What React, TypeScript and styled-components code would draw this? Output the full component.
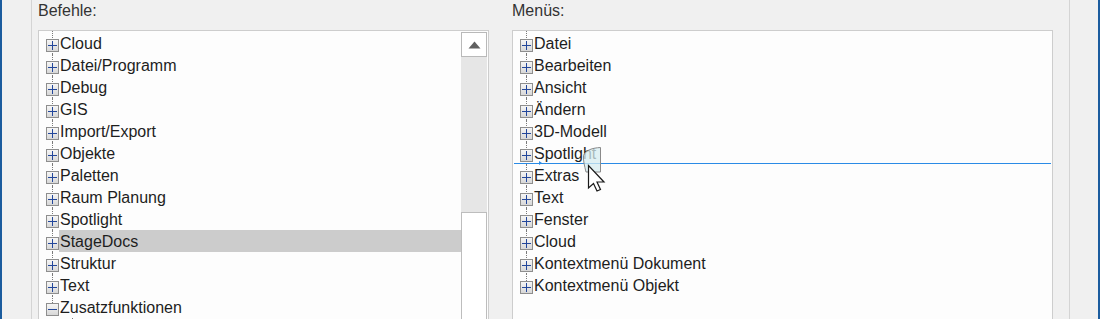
import React from "react";
import styled, { createGlobalStyle } from "styled-components";

const Global = createGlobalStyle`
  html, body { margin: 0; padding: 0; background: #f0f0f0; }
  body { font-family: "Liberation Sans", Arial, sans-serif; }
`;

const Frame = styled.div`
  display: flex;
  width: 1100px;
  height: 319px;
  overflow: hidden;
  background: #f0f0f0;
  color: #1e1e1e;
  font-family: "Liberation Sans", Arial, sans-serif;
  font-size: 16px;
`;

const LeftEdge = styled.div`
  box-sizing: border-box;
  width: 32px;
  flex: none;
  border-left: 2px solid #1b5c9e;
  border-right: 1px solid #d4d4d4;
`;

const RightEdge = styled.div`
  box-sizing: border-box;
  width: 31px;
  flex: none;
  border-left: 1px solid #d4d4d4;
  border-right: 2px solid #1b5c9e;
`;

const Main = styled.div`
  flex: 1;
  display: flex;
  gap: 23px;
  padding: 0 16px 0 6px;
  min-height: 0;
`;

const Column = styled.div<{ $w: number }>`
  width: ${(p) => p.$w}px;
  flex: none;
  display: flex;
  flex-direction: column;
  min-height: 0;
`;

const Heading = styled.div`
  height: 30px;
  flex: none;
  line-height: 22px;
  white-space: nowrap;
  color: #333333;
`;

const TreeBox = styled.div`
  position: relative;
  flex: 1;
  min-height: 0;
  display: flex;
  overflow: hidden;
  background: #fdfdfd;
  border: 1px solid #cdcdcd;
  border-bottom: none;
  padding: 1px 1px 0 1px;
`;

const TreeList = styled.div`
  flex: 1;
  padding: 0 0 0 6px;
  min-width: 0;
`;

const Row = styled.div<{ $level: number }>`
  display: flex;
  height: 22px;
  padding-left: ${(p) => p.$level * 20}px;
`;

const Gutter = styled.div<{ $first?: boolean; $last?: boolean }>`
  position: relative;
  width: 13px;
  flex: none;
  &::before {
    content: "";
    display: block;
    position: absolute;
    left: 6px;
    top: ${(p) => (p.$first ? "-1px" : "0")};
    bottom: ${(p) => (p.$last ? "11px" : "0")};
    border-left: 1px dotted #7a7a7a;
  }
`;

const Expander = styled.svg`
  position: relative;
  display: block;
  margin-top: 7px;
  z-index: 1;
`;

const Label = styled.div<{ $selected?: boolean }>`
  flex: 1;
  padding: 1px 0 0 1px;
  line-height: 21px;
  white-space: nowrap;
  background: ${(p) => (p.$selected ? "#cccccc" : "transparent")};
`;

const ScrollBar = styled.div`
  width: 26px;
  flex: none;
  display: flex;
  flex-direction: column;
  background: #e6e6e6;
`;

const ScrollButton = styled.div`
  box-sizing: border-box;
  height: 25px;
  flex: none;
  border: 1px solid #b9b9b9;
  background: #ffffff;
  display: flex;
  align-items: center;
  justify-content: center;
`;

const ScrollTrack = styled.div`
  height: 155px;
  flex: none;
`;

const ScrollThumb = styled.div`
  flex: 1;
  background: #ffffff;
  border: 1px solid #bdbdbd;
  border-bottom: none;
`;

const InsertLine = styled.div`
  position: absolute;
  left: 1px;
  right: 1px;
  top: 132px;
  height: 1px;
  background-color: #2a8be6;
  z-index: 1;
  &::after {
    content: "";
    position: absolute;
    left: 25px;
    top: -2px;
    border-left: 3px solid #2a8be6;
    border-top: 2.5px solid transparent;
    border-bottom: 2.5px solid transparent;
  }
`;

const DragCursor = styled.svg`
  position: absolute;
  left: 67px;
  top: 115px;
  z-index: 2;
`;

type Item = { label: string; level?: number; open?: boolean; selected?: boolean; leaf?: boolean };

const Box = ({ open }: { open?: boolean }) => (
  <Expander width="13" height="13" viewBox="0 0 13 13">
    <defs>
      <linearGradient id="expg" x1="0" y1="0" x2="0" y2="1">
        <stop offset="0" stopColor="#f7f7f7" />
        <stop offset="1" stopColor="#d6d6d6" />
      </linearGradient>
    </defs>
    <rect x="0.5" y="0.5" width="12" height="12" fill="url(#expg)" stroke="#8e8e8e" />
    <path d="M2 6.5H11" stroke="#23479b" strokeWidth="1" />
    {!open && <path d="M6.5 2V11" stroke="#23479b" strokeWidth="1" />}
  </Expander>
);

const Tree = ({ items }: { items: Item[] }) => {
  const roots = items.filter((i) => !i.level);
  const lastRoot = roots[roots.length - 1];
  return (
    <TreeList>
      {items.map((it, idx) => {
        const level = it.level || 0;
        return (
          <Row key={idx} $level={level}>
            <Gutter $first={idx === 0 && level === 0} $last={it === lastRoot}>
              {!it.leaf && <Box open={it.open} />}
            </Gutter>
            {it.label && <Label $selected={it.selected}>{it.label}</Label>}
          </Row>
        );
      })}
    </TreeList>
  );
};

const commands: Item[] = [
  { label: "Cloud" },
  { label: "Datei/Programm" },
  { label: "Debug" },
  { label: "GIS" },
  { label: "Import/Export" },
  { label: "Objekte" },
  { label: "Paletten" },
  { label: "Raum Planung" },
  { label: "Spotlight" },
  { label: "StageDocs", selected: true },
  { label: "Struktur" },
  { label: "Text" },
  { label: "Zusatzfunktionen", open: true },
  { label: "", level: 1, leaf: true },
];

const menus: Item[] = [
  { label: "Datei" },
  { label: "Bearbeiten" },
  { label: "Ansicht" },
  { label: "Ändern" },
  { label: "3D-Modell" },
  { label: "Spotlight" },
  { label: "Extras" },
  { label: "Text" },
  { label: "Fenster" },
  { label: "Cloud" },
  { label: "Kontextmenü Dokument" },
  { label: "Kontextmenü Objekt" },
];

export default function App() {
  return (
    <>
      <Global />
      <Frame>
        <LeftEdge />
        <Main>
          <Column $w={451}>
            <Heading>Befehle:</Heading>
            <TreeBox>
              <Tree items={commands} />
              <ScrollBar>
                <ScrollButton>
                  <svg width="13" height="8" viewBox="0 0 13 8">
                    <path d="M6.5 0.5L12.5 7.5H0.5Z" fill="#606060" />
                  </svg>
                </ScrollButton>
                <ScrollTrack />
                <ScrollThumb />
              </ScrollBar>
            </TreeBox>
          </Column>
          <Column $w={541}>
            <Heading>Menüs:</Heading>
            <TreeBox>
              <Tree items={menus} />
              <InsertLine />
              <DragCursor width="40" height="46" viewBox="0 0 40 46">
                <path
                  d="M3.5 9.5 C 6 4, 12 2, 20.5 1.5 L 20.5 26 L 6 26 C 4.5 20, 3 14, 3.5 9.5 Z"
                  fill="rgba(214,236,240,0.75)"
                  stroke="#8a8a8a"
                  strokeWidth="1"
                />
                <path
                  d="M8.5 19.5 L8.5 42 L13.5 37.5 L17 45 L20.5 43.5 L17 36 L24 36 Z"
                  fill="#ffffff"
                  stroke="#1a1a1a"
                  strokeWidth="1.2"
                  strokeLinejoin="miter"
                />
              </DragCursor>
            </TreeBox>
          </Column>
        </Main>
        <RightEdge />
      </Frame>
    </>
  );
}
